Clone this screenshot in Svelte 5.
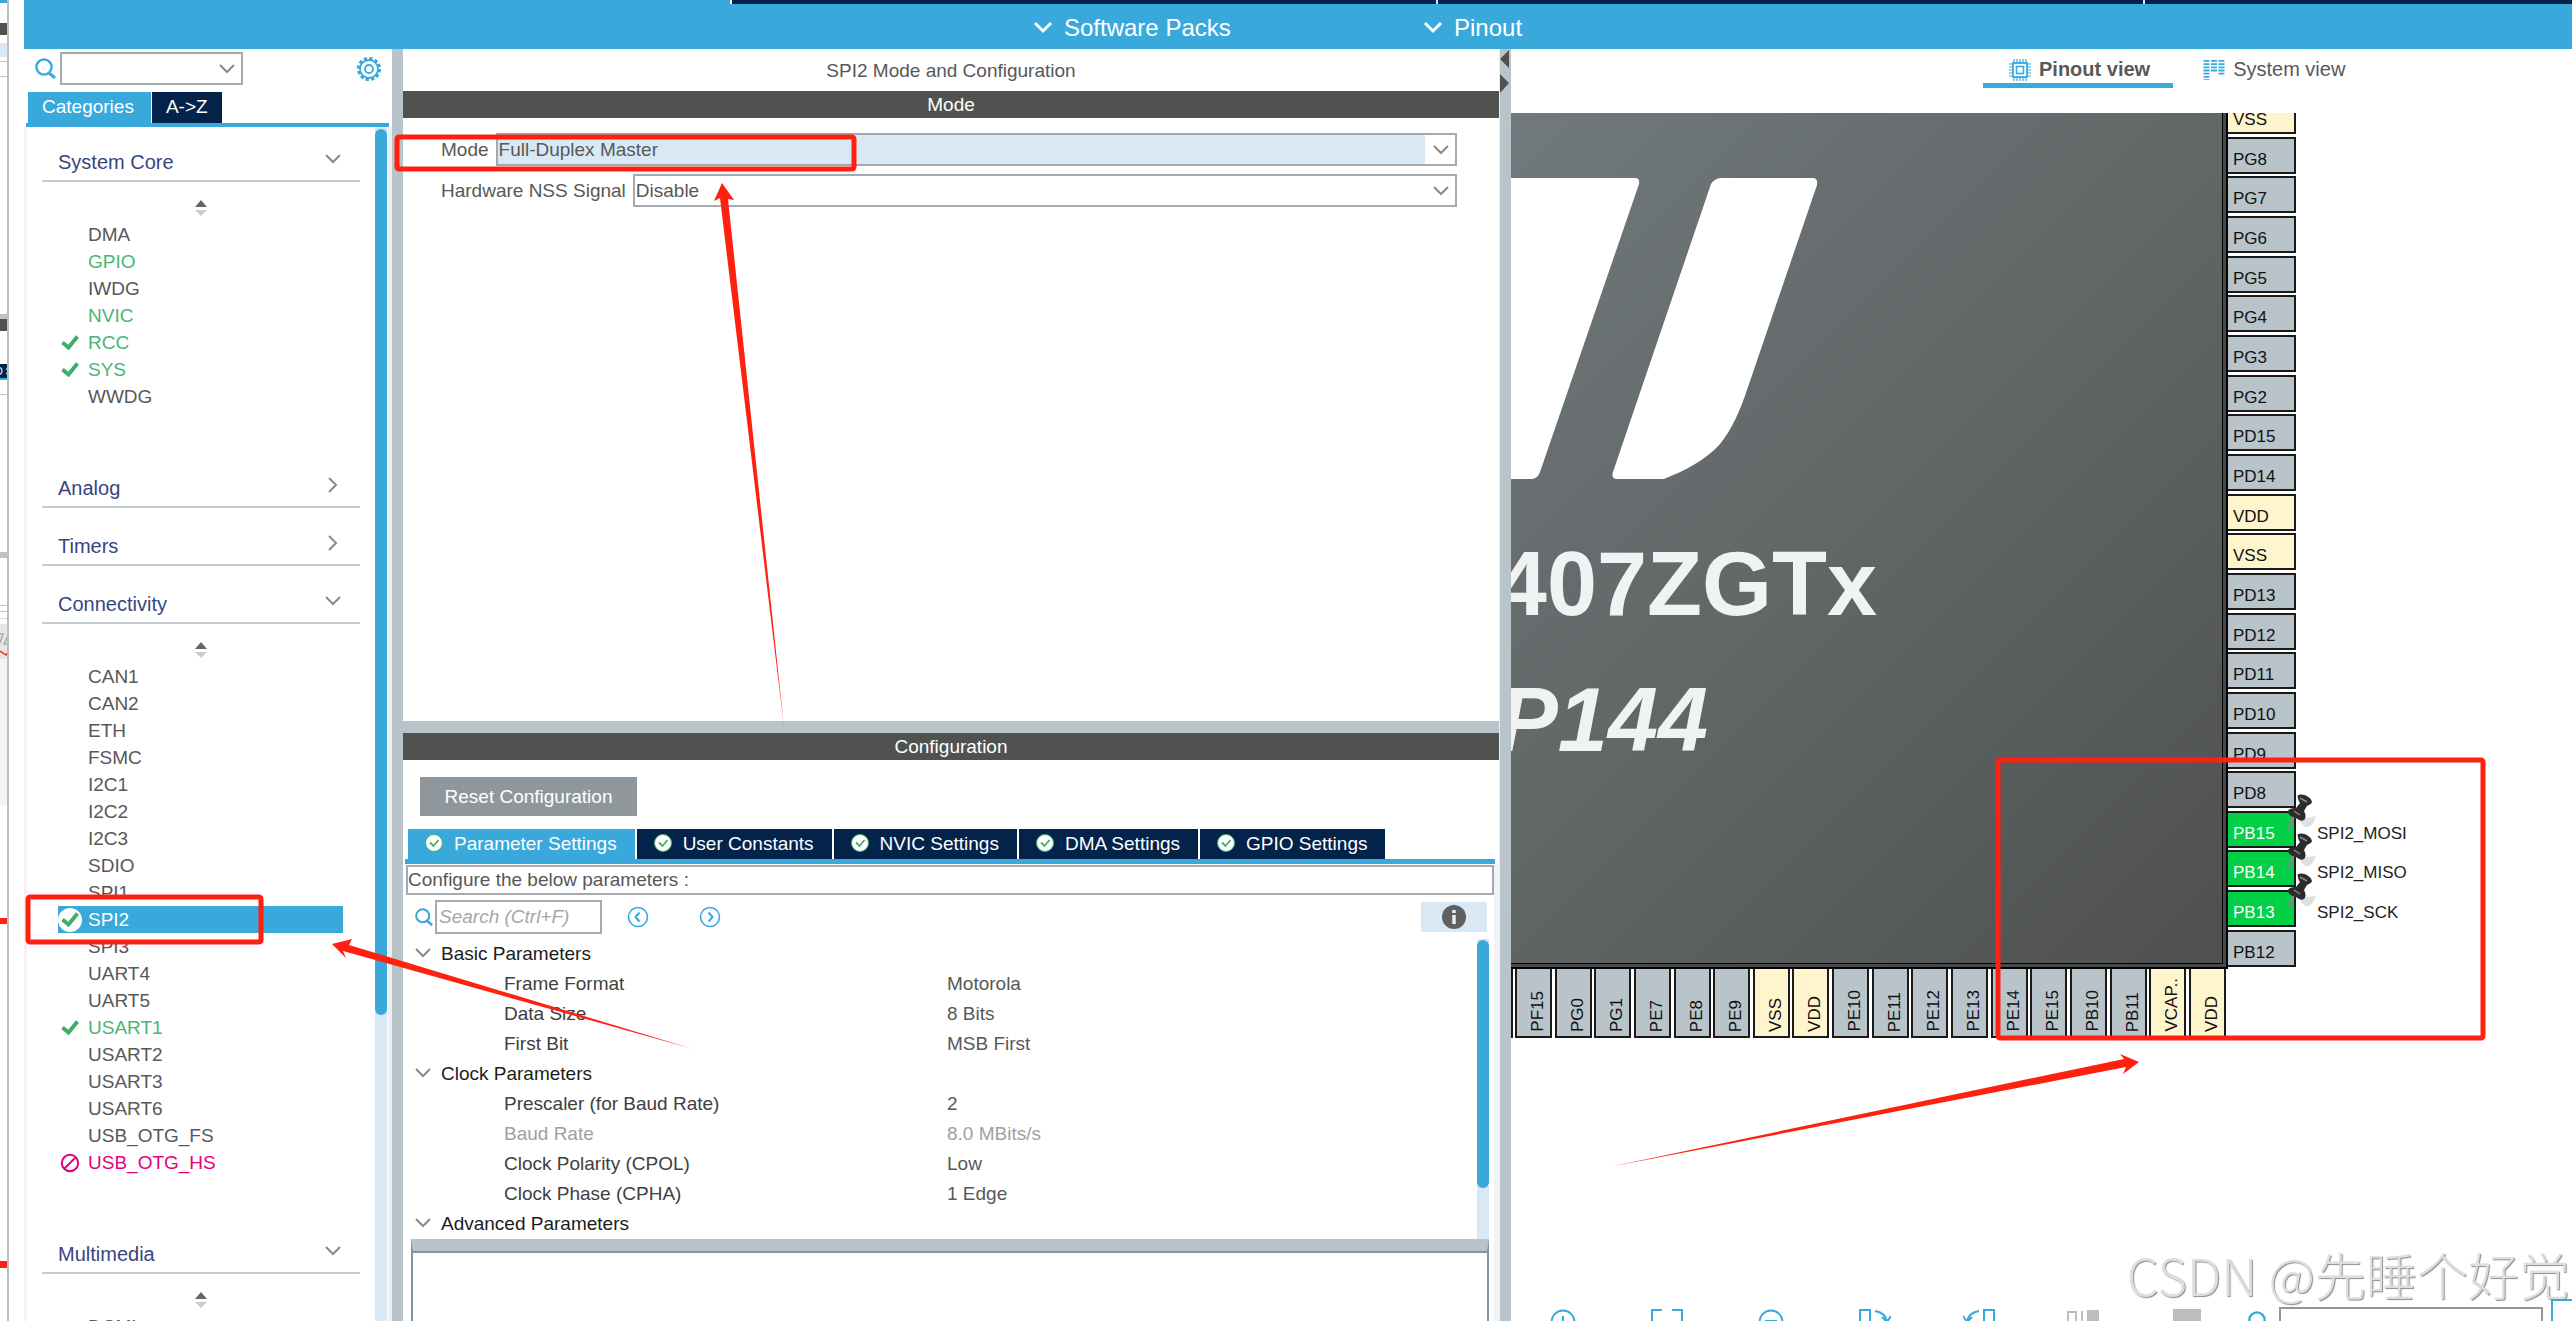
<script>
  let mode = $state('Full-Duplex Master');
  let nss = $state('Disable');
  let selected = $state('SPI2');
  let search = $state('');

  const menus = ['Software Packs', 'Pinout'];

  const categories = [
    {
      name: 'System Core',
      open: true,
      items: [
        { name: 'DMA' },
        { name: 'GPIO', status: 'on' },
        { name: 'IWDG' },
        { name: 'NVIC', status: 'on' },
        { name: 'RCC', status: 'ok' },
        { name: 'SYS', status: 'ok' },
        { name: 'WWDG' }
      ]
    },
    { name: 'Analog', open: false, items: [] },
    { name: 'Timers', open: false, items: [] },
    {
      name: 'Connectivity',
      open: true,
      items: [
        { name: 'CAN1' },
        { name: 'CAN2' },
        { name: 'ETH' },
        { name: 'FSMC' },
        { name: 'I2C1' },
        { name: 'I2C2' },
        { name: 'I2C3' },
        { name: 'SDIO' },
        { name: 'SPI1' },
        { name: 'SPI2', status: 'ok' },
        { name: 'SPI3' },
        { name: 'UART4' },
        { name: 'UART5' },
        { name: 'USART1', status: 'ok' },
        { name: 'USART2' },
        { name: 'USART3' },
        { name: 'USART6' },
        { name: 'USB_OTG_FS' },
        { name: 'USB_OTG_HS', status: 'blocked' }
      ]
    },
    { name: 'Multimedia', open: true, items: [{ name: 'DCMI' }] }
  ];

  const configTabs = [
    'Parameter Settings',
    'User Constants',
    'NVIC Settings',
    'DMA Settings',
    'GPIO Settings'
  ];

  const params = [
    { group: 'Basic Parameters' },
    { label: 'Frame Format', value: 'Motorola' },
    { label: 'Data Size', value: '8 Bits' },
    { label: 'First Bit', value: 'MSB First' },
    { group: 'Clock Parameters' },
    { label: 'Prescaler (for Baud Rate)', value: '2' },
    { label: 'Baud Rate', value: '8.0 MBits/s', readonly: true },
    { label: 'Clock Polarity (CPOL)', value: 'Low' },
    { label: 'Clock Phase (CPHA)', value: '1 Edge' },
    { group: 'Advanced Parameters' }
  ];

  const sidePins = [
    'VSS', 'PG8', 'PG7', 'PG6', 'PG5', 'PG4', 'PG3', 'PG2', 'PD15', 'PD14', 'VDD',
    'VSS', 'PD13', 'PD12', 'PD11', 'PD10', 'PD9', 'PD8', 'PB15', 'PB14', 'PB13', 'PB12'
  ];
  const bottomPins = [
    'PF15', 'PG0', 'PG1', 'PE7', 'PE8', 'PE9', 'VSS', 'VDD', 'PE10', 'PE11',
    'PE12', 'PE13', 'PE14', 'PE15', 'PB10', 'PB11', 'VCAP..', 'VDD'
  ];
  const signals = { PB15: 'SPI2_MOSI', PB14: 'SPI2_MISO', PB13: 'SPI2_SCK' };

  const isPower = (pin) => pin.startsWith('V');
</script>

{#snippet chevron(dir)}
  <svg class="chevron" class:right={dir === 'right'} viewBox="0 0 16 10" aria-hidden="true">
    <path d="M1 1l7 7 7-7" fill="none" stroke="currentColor" stroke-width="2" />
  </svg>
{/snippet}

{#snippet lens()}
  <svg class="lens" viewBox="0 0 21 21" aria-hidden="true">
    <circle cx="9" cy="9" r="7.6" fill="none" stroke="#39a9dc" stroke-width="2.4" />
    <path d="M14 15l6 5" stroke="#39a9dc" stroke-width="3" />
  </svg>
{/snippet}

{#snippet tick()}
  <svg class="tick" viewBox="0 0 18 15" aria-hidden="true">
    <path d="M1.5 7.5l6 5 9-11" fill="none" stroke="#3fae6b" stroke-width="4" />
  </svg>
{/snippet}

<div class="page">
  <!-- Edge of the window behind -->
  <svg class="behind" width="9" height="100%" aria-hidden="true">
    <rect width="9" height="3" fill="#39a9dc" />
    <rect y="23" width="9" height="12" fill="#505250" />
    <rect y="43" width="9" height="14" fill="#d9e8f5" />
    <rect y="61" width="9" height="1" fill="#b8c4ca" />
    <rect y="76" width="9" height="1" fill="#b8c4ca" />
    <rect y="314" width="9" height="5" fill="#b8c4ca" />
    <rect y="319" width="9" height="12" fill="#505250" />
    <rect y="364" width="9" height="14" fill="#03234b" />
    <text x="-5" y="375" font-size="10" fill="#fff">O S</text>
    <rect y="378" width="9" height="2" fill="#39a9dc" />
    <rect y="394" width="9" height="1" fill="#b8c4ca" />
    <rect y="552" width="9" height="6" fill="#b8c4ca" />
    <rect y="605" width="9" height="1" fill="#b8c4ca" />
    <rect y="611" width="9" height="1" fill="#b8c4ca" />
    <rect y="618" width="9" height="1" fill="#dcdcdc" />
    <rect y="624" width="9" height="35" fill="#e6e6e6" />
    <rect y="659" width="9" height="146" fill="#f3f3f3" />
    <path d="M0 634h3l-3 9M9 634l-5 10h5" fill="none" stroke="#aaa" stroke-width="1.5" />
    <path d="M0 651l3 2 3 2 3-4" fill="none" stroke="#ff2010" stroke-width="1.5" />
    <rect y="918" width="9" height="6" fill="#ff2010" />
    <rect y="1261" width="9" height="7" fill="#ff2010" />
    <rect x="7" width="2" height="100%" fill="#bdbdbd" />
  </svg>

  <div class="window">
    <header class="topbar">
      <div class="main-tabs"><span></span><span></span><span></span></div>
      <nav class="menus">
        {#each menus as menu}
          <button class="menu" type="button">
            <svg viewBox="0 0 20 13" width="20" height="13" aria-hidden="true">
              <path d="M2 2l8 8 8-8" fill="none" stroke="#fff" stroke-width="3" />
            </svg>
            {menu}
          </button>
        {/each}
      </nav>
    </header>

    <div class="workspace">
      <!-- Peripheral categories -->
      <aside class="sidebar">
        <div class="side-search">
          {@render lens()}
          <div class="select-box finder">
            <select aria-label="Find peripheral"><option></option></select>
            {@render chevron()}
          </div>
          <button class="gear" type="button" aria-label="Settings">
            <svg viewBox="0 0 26 26" width="26" height="26">
              <circle cx="13" cy="13" r="10.6" fill="none" stroke="#39a9dc" stroke-width="3" stroke-dasharray="3.3 2.25" />
              <circle cx="13" cy="13" r="9" fill="#fff" stroke="#39a9dc" stroke-width="1.8" />
              <circle cx="13" cy="13" r="4" fill="none" stroke="#39a9dc" stroke-width="1.8" />
            </svg>
          </button>
        </div>
        <div class="side-tabs">
          <button class="side-tab active" type="button">Categories</button>
          <button class="side-tab" type="button">A-&gt;Z</button>
        </div>
        <div class="side-body">
          <div class="side-list">
            {#each categories as cat}
              <button class="cat-head" type="button">
                {cat.name}
                {@render chevron(cat.open ? 'down' : 'right')}
              </button>
              {#if cat.open}
                <div class="cat-body">
                  <svg class="sorter" viewBox="0 0 12 16" aria-hidden="true">
                    <path d="M0 7l6-7 6 7z" fill="#666" />
                    <path d="M0 10h12l-6 6z" fill="#ccc" />
                  </svg>
                  {#each cat.items as item}
                    <button
                      class="item {item.status ?? ''}"
                      class:selected={selected === item.name}
                      type="button"
                      onclick={() => { selected = item.name; }}
                    >
                      <span class="mark">
                        {#if item.status === 'ok'}
                          {@render tick()}
                        {:else if item.status === 'blocked'}
                          <svg viewBox="0 0 20 20" width="20" height="20" aria-hidden="true">
                            <circle cx="10" cy="10" r="8.2" fill="none" stroke="#e6007e" stroke-width="2" />
                            <path d="M4.5 15.5l11-11" stroke="#e6007e" stroke-width="2" />
                          </svg>
                        {/if}
                      </span>
                      {item.name}
                    </button>
                  {/each}
                </div>
              {/if}
            {/each}
          </div>
          <div class="scroll"><div class="thumb side-thumb"></div></div>
        </div>
      </aside>

      <div class="splitter"></div>

      <!-- Mode and configuration -->
      <main class="config">
        <h1 class="title">SPI2 Mode and Configuration</h1>
        <h2 class="bar">Mode</h2>
        <div class="mode-form">
          <div class="field">
            <label for="mode">Mode</label>
            <div class="select-box tinted">
              <select id="mode" bind:value={mode}>
                <option>Full-Duplex Master</option>
                <option>Disable</option>
              </select>
              {@render chevron()}
            </div>
          </div>
          <div class="field">
            <label for="nss">Hardware NSS Signal</label>
            <div class="select-box">
              <select id="nss" bind:value={nss}>
                <option>Disable</option>
              </select>
              {@render chevron()}
            </div>
          </div>
        </div>
        <div class="divider"></div>
        <h2 class="bar">Configuration</h2>
        <button class="reset" type="button">Reset Configuration</button>
        <div class="config-tabs">
          {#each configTabs as tab, i}
            <button class="config-tab" class:active={i === 0} type="button">
              <svg viewBox="0 0 18 18" width="18" height="18" aria-hidden="true">
                <circle cx="9" cy="9" r="8.5" fill="#fff" stroke="#3fae6b" />
                <path d="M5 8.5l3.5 3.5 5-6" fill="none" stroke="#3fae6b" stroke-width="1.8" />
              </svg>
              {tab}
            </button>
          {/each}
        </div>
        <div class="config-body">
          <p class="hint">Configure the below parameters :</p>
          <div class="param-tools">
            {@render lens()}
            <input type="text" placeholder="Search (Ctrl+F)" aria-label="Search" bind:value={search} />
            <button class="step" type="button" aria-label="Previous">
              <svg viewBox="0 0 22 22" width="22" height="22">
                <circle cx="11" cy="11" r="9.5" fill="none" stroke="#39a9dc" stroke-width="1.6" />
                <path d="M12.5 6.5l-4 4.5 4 4.5" fill="none" stroke="#39a9dc" stroke-width="2" />
              </svg>
            </button>
            <button class="step" type="button" aria-label="Next">
              <svg viewBox="0 0 22 22" width="22" height="22">
                <circle cx="11" cy="11" r="9.5" fill="none" stroke="#39a9dc" stroke-width="1.6" />
                <path d="M9.5 6.5l4 4.5-4 4.5" fill="none" stroke="#39a9dc" stroke-width="2" />
              </svg>
            </button>
            <button class="info" type="button" aria-label="Information">
              <svg viewBox="0 0 24 24" width="24" height="24">
                <circle cx="12" cy="12" r="12" fill="#606060" />
                <path d="M12 5v3M12 10v9" stroke="#e8eef4" stroke-width="3.5" />
              </svg>
            </button>
          </div>
          <div class="param-area">
            <table class="params">
              <tbody>
                {#each params as p}
                  {#if p.group}
                    <tr class="group">
                      <th colspan="2"><span>{@render chevron()}{p.group}</span></th>
                    </tr>
                  {:else}
                    <tr class:readonly={p.readonly}>
                      <th>{p.label}</th>
                      <td>{p.value}</td>
                    </tr>
                  {/if}
                {/each}
              </tbody>
            </table>
            <div class="scroll"><div class="thumb param-thumb"></div></div>
          </div>
          <div class="notes"></div>
        </div>
      </main>

      <div class="splitter">
        <svg viewBox="0 0 11 44" width="11" height="44" aria-hidden="true">
          <path d="M9 1v18l-9-9zM0 25v19l9-10z" fill="#505250" />
        </svg>
      </div>

      <!-- Chip pinout -->
      <section class="pinout">
        <div class="view-tabs">
          <button class="view-tab active" type="button">
            <svg viewBox="0 0 22 22" width="22" height="22" aria-hidden="true">
              <path d="M5 0v22M8 0v22M11 0v22M14 0v22M17 0v22M0 5h22M0 8h22M0 11h22M0 14h22M0 17h22" stroke="#39a9dc" stroke-width="1.2" />
              <rect x="4" y="4" width="14" height="14" fill="#fff" stroke="#39a9dc" stroke-width="1.8" />
              <rect x="7.5" y="7.5" width="7" height="7" fill="#fff" stroke="#39a9dc" stroke-width="1.6" />
            </svg>
            Pinout view
          </button>
          <button class="view-tab" type="button">
            <svg viewBox="0 0 22 22" width="22" height="22" aria-hidden="true">
              <path d="M3.5 1v20" stroke="#39a9dc" stroke-width="6" stroke-dasharray="1.8 1.4" />
              <path d="M11 1v12" stroke="#39a9dc" stroke-width="6" stroke-dasharray="1.8 1.4" />
              <path d="M18.5 1v15" stroke="#39a9dc" stroke-width="6" stroke-dasharray="1.8 1.4" />
            </svg>
            System view
          </button>
        </div>

        <div class="package">
          <div class="chip">
            <svg class="face" viewBox="0 0 710 850" width="710" height="850">
              <path d="M0 65h124q5 0 4 6L29 359q-2 6-8 7H0z" fill="#fff" />
              <path d="M209 65h93q5 0 4 7L237 274c-8 24-16 42-28 57-14 16-36 27-56 35h-48q-5-1-3-7L200 71q3-5 9-6z" fill="#fff" />
              <text x="366" y="502" text-anchor="end">STM32F407ZGTx</text>
              <text x="197" y="638" text-anchor="end" font-style="italic">LQFP144</text>
            </svg>
          </div>
          <div class="side-pins">
            {#each sidePins as pin, i}
              <div class="pin" class:power={isPower(pin)} class:used={signals[pin]} class:cut={i === 0}>
                {pin}
                {#if signals[pin]}
                  <svg class="tack" viewBox="0 0 30 38" width="30" height="38" aria-hidden="true">
                    <path d="M14 28c5-6 10-3 16-6-2 8-6 12-11 11z" fill="#000" opacity="0.12" />
                    <path d="M8 22L2 35" stroke="#888" stroke-width="2.5" />
                    <path d="M12 1c5-2 13 2 14 7-1 3-4 3-5 4l-3 5c2 4 2 7 0 9-4 2-6-1-8-2-4-1-8-3-8-7 2-3 5-3 8-3l4-5c-1-2-3-5-2-8z" fill="#2c2c2c" />
                    <path d="M14 4l7 4M8 17l6 4" stroke="#8a8a8a" stroke-width="1.5" />
                  </svg>
                  <span class="signal">{signals[pin]}</span>
                {/if}
              </div>
            {/each}
          </div>
          <div class="bottom-pins">
            {#each bottomPins as pin}
              <div class="pin down" class:power={isPower(pin)}><span>{pin}</span></div>
            {/each}
          </div>
        </div>

        <div class="toolbar">
          <button class="tool" type="button" aria-label="Zoom in">
            <svg viewBox="0 0 28 26" width="28" height="26"><circle cx="14" cy="13" r="11.5" /><path d="M14 7v12M8 13h12" /></svg>
          </button>
          <button class="tool" type="button" aria-label="Fit">
            <svg viewBox="0 0 32 26" width="32" height="26"><path d="M1 12V1h10M21 1h10v11" /></svg>
          </button>
          <button class="tool" type="button" aria-label="Zoom out">
            <svg viewBox="0 0 28 26" width="28" height="26"><circle cx="14" cy="13" r="11.5" /><path d="M8 12h12" /></svg>
          </button>
          <button class="tool" type="button" aria-label="Rotate right">
            <svg viewBox="0 0 32 26" width="32" height="26"><path d="M1 26V1h10v25M16 2c6 1 11 4 12 11M23 8l5 5 4-6" /></svg>
          </button>
          <button class="tool" type="button" aria-label="Rotate left">
            <svg viewBox="0 0 32 26" width="32" height="26"><path d="M31 26V1H21v25M16 2C10 3 5 6 4 13M9 8l-5 5-4-6" /></svg>
          </button>
          <button class="tool off" type="button" aria-label="Flip">
            <svg viewBox="0 0 32 26" width="32" height="26"><path d="M1 26V3h8v23M15 2v24" /><rect x="21" y="2" width="10" height="24" /></svg>
          </button>
          <button class="tool off" type="button" aria-label="Mirror">
            <svg viewBox="0 0 28 26" width="28" height="26"><rect x="1" y="0" width="26" height="12" /></svg>
          </button>
          <div class="pin-search">
            {@render lens()}
            <input type="text" aria-label="Find pin" />
            <button type="button" class="corner" aria-label="Keyboard"></button>
          </div>
        </div>
      </section>
    </div>
  </div>

  <p class="watermark">CSDN @先睡个好觉</p>

  <!-- Highlight boxes and arrows -->
  <svg class="notes-layer" width="100%" height="100%" aria-hidden="true">
    <g fill="none" stroke="#ff2010" stroke-width="5">
      <rect x="397" y="137" width="457" height="32" rx="2" />
      <rect x="28" y="897" width="233" height="45" rx="2" />
      <rect x="1998" y="760" width="485" height="278" rx="2" />
    </g>
    <g fill="#ff2010">
      <path d="M722 183L734 200 728 199 784 727 720 198 714 201z" />
      <path d="M332 944L352 939 349 945 693 1049 343 951 346 958z" />
      <path d="M2139 1062L2120 1054 2124 1059 1609 1167 2126 1067 2123 1074z" />
    </g>
  </svg>
</div>

<style>
  :global(body) { margin: 0; }

  .page {
    position: relative;
    display: flex;
    height: 100vh;
    overflow: hidden;
    background: #fff;
    color: #585858;
    font-family: "Liberation Sans", Arial, sans-serif;
    font-size: 19px;
    line-height: 27px;
  }

  button {
    padding: 0;
    border: 0;
    background: none;
    color: inherit;
    font: inherit;
    text-align: left;
  }

  h1, h2, p { margin: 0; font-size: 19px; font-weight: 400; }

  svg { display: block; flex-shrink: 0; }

  .behind { margin-right: 15px; }

  .window {
    flex: 1;
    min-width: 0;
    display: flex;
    flex-direction: column;
  }

  /* Top bar */
  .topbar { height: 49px; background: #39a9dc; flex-shrink: 0; }

  .main-tabs {
    display: grid;
    grid-template-columns: 704px 705px 1fr;
    gap: 2px;
    height: 4px;
    margin-left: 706px;
    border-left: 2px solid #fff;
    background: #d8e8f0;
  }

  .main-tabs span { background: #03234b; }

  .menus { display: flex; padding-left: 1009px; }

  .menu {
    display: flex;
    align-items: center;
    gap: 11px;
    width: 390px;
    height: 46px;
    color: #fff;
    font-size: 24px;
  }

  .workspace {
    flex: 1;
    min-height: 0;
    display: grid;
    grid-template-columns: 368px 11px minmax(0, 1097fr) 11px minmax(0, 1061fr);
  }

  .splitter { background: #b8c4ca; }

  .chevron { width: 16px; height: 10px; color: #8a8a8a; }
  .chevron.right { transform: rotate(-90deg); }
  .lens { width: 21px; height: 21px; }

  .select-box {
    flex: 1;
    display: grid;
    align-items: center;
    height: 33px;
  }

  .select-box select,
  .select-box .chevron { grid-area: 1 / 1; }

  .select-box select {
    width: 100%;
    height: 33px;
    padding: 0 30px 0 1px;
    border: 2px solid #a3abb1;
    border-radius: 0;
    background: #fff;
    color: #585858;
    font: inherit;
    appearance: none;
  }

  .select-box .chevron {
    justify-self: end;
    margin-right: 8px;
    pointer-events: none;
  }

  .select-box.tinted select {
    background: linear-gradient(to left, #fff 30px, #d9e8f5 30px);
  }

  /* Sidebar */
  .sidebar {
    display: flex;
    flex-direction: column;
    min-height: 0;
    overflow: hidden;
  }

  .side-search {
    display: flex;
    align-items: center;
    height: 39px;
    padding: 0 10px 4px 11px;
    flex-shrink: 0;
  }

  .finder { flex: 0 0 183px; margin-left: 4px; }
  .gear { margin-left: auto; }

  .side-tabs {
    display: flex;
    gap: 1px;
    margin: 0 3px 0 2px;
    padding-left: 2px;
    border-bottom: 4px solid #39a9dc;
  }

  .side-tab {
    height: 31px;
    padding: 0 14px 2px;
    background: #03234b;
    color: #fff;
  }

  .side-tab.active { padding: 0 17px 2px 14px; background: #39a9dc; }

  .side-body {
    flex: 1;
    min-height: 0;
    display: flex;
    padding-right: 1px;
    border-left: 3px solid #f2f2f2;
    border-right: 4px solid #eceff1;
  }

  .side-list {
    flex: 1;
    overflow: hidden;
    padding: 0 15px;
  }

  .cat-head {
    display: flex;
    align-items: center;
    justify-content: space-between;
    width: 100%;
    height: 58px;
    padding: 20px 19px 0 16px;
    border-bottom: 2px solid #c5ced3;
    box-sizing: border-box;
    color: #39457f;
    font-size: 20px;
  }

  .cat-head:first-child { height: 55px; padding-top: 17px; }
  .cat-head .chevron { margin-bottom: 6px; }
  .cat-body { padding: 0 17px 40px 16px; }

  .sorter {
    width: 12px;
    height: 16px;
    margin: 0 auto;
    padding: 18px 0 5px 0;
  }

  .item {
    display: flex;
    align-items: center;
    width: 100%;
    height: 27px;
  }

  .mark {
    display: flex;
    align-items: center;
    justify-content: center;
    width: 24px;
    height: 24px;
    margin-right: 6px;
    border-radius: 50%;
  }

  .tick { width: 18px; height: 15px; }
  .on, .ok { color: #4bb573; }
  .blocked { color: #e6007e; }
  .selected { background: #39a9dc; color: #fff; }
  .selected .mark { background: #fff; }

  .scroll { width: 12px; background: #d9e8f5; }
  .thumb { border-radius: 6px; background: #39a9dc; }
  .side-thumb { height: 886px; margin-top: 2px; }

  /* Mode and configuration */
  .config {
    display: flex;
    flex-direction: column;
    min-height: 0;
    border-right: 1px solid #eceff1;
  }

  .title {
    height: 42px;
    line-height: 44px;
    text-align: center;
  }

  .bar {
    height: 27px;
    background: #505250;
    color: #fff;
    text-align: center;
    flex-shrink: 0;
  }

  .mode-form {
    display: flex;
    flex-direction: column;
    gap: 8px;
    height: 588px;
    padding: 15px 42px 0 38px;
    flex-shrink: 0;
  }

  .field { display: flex; align-items: center; gap: 7px; }
  .divider { height: 12px; background: #b8c4ca; flex-shrink: 0; }

  .reset {
    width: 217px;
    height: 39px;
    margin: 17px 0 13px 17px;
    background: #8f979c;
    color: #fff;
    text-align: center;
    flex-shrink: 0;
  }

  .config-tabs {
    display: flex;
    margin: 0 4px 0 2px;
    padding-left: 3px;
    border-bottom: 5px solid #39a9dc;
  }

  .config-tab {
    display: flex;
    align-items: center;
    gap: 11px;
    height: 30px;
    padding: 0 18px 2px 17px;
    border-right: 2px solid #fff;
    background: #03234b;
    color: #fff;
  }

  .config-tab.active { background: #39a9dc; }

  .config-body {
    flex: 1;
    min-height: 0;
    display: flex;
    flex-direction: column;
    padding: 1px 0 0 3px;
    border-right: 5px solid #f0f2f4;
  }

  .hint {
    height: 26px;
    border: 2px solid #a3abb1;
    line-height: 26px;
  }

  .param-tools {
    display: flex;
    align-items: center;
    height: 44px;
    padding: 0 7px 0 9px;
    flex-shrink: 0;
  }

  .param-tools .lens { width: 18px; height: 18px; }

  .param-tools input {
    width: 167px;
    height: 34px;
    margin: 0 25px 0 2px;
    padding: 0 2px;
    border: 2px solid #a3abb1;
    box-sizing: border-box;
    font: inherit;
  }

  .param-tools input::placeholder { color: #a6a6a6; font-style: italic; }
  .step { margin-right: 50px; }

  .info {
    display: grid;
    place-items: center;
    width: 66px;
    height: 30px;
    margin-left: auto;
    background: #d9e8f5;
  }

  .param-area {
    display: flex;
    flex-shrink: 0;
    margin: 0 5px;
  }

  .params {
    flex: 1;
    border-collapse: collapse;
    table-layout: fixed;
  }

  .params tr { height: 30px; }

  .params th {
    width: 443px;
    padding: 0 0 2px 93px;
    box-sizing: border-box;
    color: #404040;
    font-weight: 400;
    text-align: left;
  }

  .params td { padding: 0 0 2px 93px; }
  .params .group th { padding-left: 4px; color: #1c1c1c; }
  .params .group span { display: flex; align-items: center; gap: 10px; }
  .params .readonly th, .params .readonly td { color: #a0a0a0; }
  .param-thumb { height: 248px; margin-top: 1px; }

  .notes {
    flex: 1;
    margin: 0 5px;
    border: 2px solid #8593a0;
    border-top: 12px solid #b8c4ca;
    border-bottom: 0;
    box-shadow: inset 0 2px #8593a0;
  }

  /* Pinout */
  .pinout {
    display: flex;
    flex-direction: column;
    min-height: 0;
    overflow: hidden;
  }

  .view-tabs {
    display: flex;
    gap: 4px;
    height: 64px;
    padding-left: 472px;
    flex-shrink: 0;
  }

  .view-tab {
    display: flex;
    align-items: center;
    gap: 8px;
    height: 39px;
    padding: 7px 23px 0 26px;
    border-bottom: 5px solid transparent;
    font-size: 20px;
  }

  .view-tab.active { border-color: #39a9dc; font-weight: 700; }

  .package {
    display: grid;
    grid-template-columns: 717px 68px;
    grid-template-rows: 856px 69px;
    flex-shrink: 0;
    color: #111;
    font-size: 17px;
  }

  .chip {
    overflow: hidden;
    border: solid #000;
    border-width: 0 2px 2px 0;
    box-shadow: inset -3px -3px #484a4a, inset -4px -4px #000;
    background: linear-gradient(135deg, #71797c, #616666 48%, #4e504f);
  }

  .face text {
    fill: #f0f2f4;
    font-family: "Liberation Sans", Arial, sans-serif;
    font-size: 90px;
    font-weight: 700;
  }

  .side-pins {
    display: flex;
    flex-direction: column;
    justify-content: space-between;
    height: 854px;
  }

  .pin {
    position: relative;
    height: 37px;
    padding: 7px 0 0 5px;
    border: solid #1a1a1a;
    border-width: 2px 2px 2px 0;
    box-sizing: border-box;
    background: #b8c4ca;
  }

  .power { background: #fff5cc; }
  .used { background: #02d046; color: #fff; }

  .cut {
    display: flex;
    align-items: flex-end;
    height: 21px;
    padding-top: 0;
    border-top: 0;
    line-height: 25px;
    overflow: hidden;
  }

  .tack { position: absolute; top: -19px; left: 58px; z-index: 1; }

  .signal {
    position: absolute;
    top: 7px;
    left: 89px;
    color: #222;
    white-space: nowrap;
  }

  .bottom-pins {
    display: flex;
    justify-content: space-between;
    padding: 0 2px;
    border-left: 2px solid #1a1a1a;
  }

  .down {
    display: flex;
    justify-content: center;
    align-items: flex-end;
    width: 37px;
    height: 69px;
    padding: 0 0 4px 9px;
    border-width: 0 2px 2px 2px;
  }

  .down span {
    writing-mode: vertical-rl;
    transform: rotate(180deg);
    line-height: 20px;
  }

  .toolbar {
    display: flex;
    height: 22px;
    margin-top: auto;
    overflow: hidden;
    flex-shrink: 0;
  }

  .tool {
    display: flex;
    justify-content: center;
    flex: 0 0 104px;
    height: 36px;
    padding-top: 10px;
    fill: none;
    stroke: #39a9dc;
    stroke-width: 2;
  }

  .off { fill: #bdbdbd; stroke: #bdbdbd; }
  .off path { fill: none; }

  .pin-search {
    display: flex;
    align-items: flex-start;
    flex: 1;
    padding-left: 9px;
  }

  .pin-search .lens { margin-top: 12px; }

  .pin-search input {
    flex: 1;
    min-width: 0;
    height: 33px;
    margin: 8px 8px 0 10px;
    border: 2px solid #8f979c;
    box-sizing: border-box;
    background: #fff;
    font: inherit;
  }

  .corner {
    width: 21px;
    height: 40px;
    border: solid #39a9dc;
    border-width: 2px 0 0 2px;
  }

  .watermark {
    position: absolute;
    right: 2px;
    bottom: 15px;
    color: #dedede;
    font-family: "Noto Sans CJK SC", sans-serif;
    font-size: 51px;
    font-weight: 300;
    line-height: 64px;
    text-shadow: 1px 1px 1px #8c8c8c;
    white-space: nowrap;
  }

  .notes-layer {
    position: absolute;
    inset: 0;
    pointer-events: none;
  }
</style>
